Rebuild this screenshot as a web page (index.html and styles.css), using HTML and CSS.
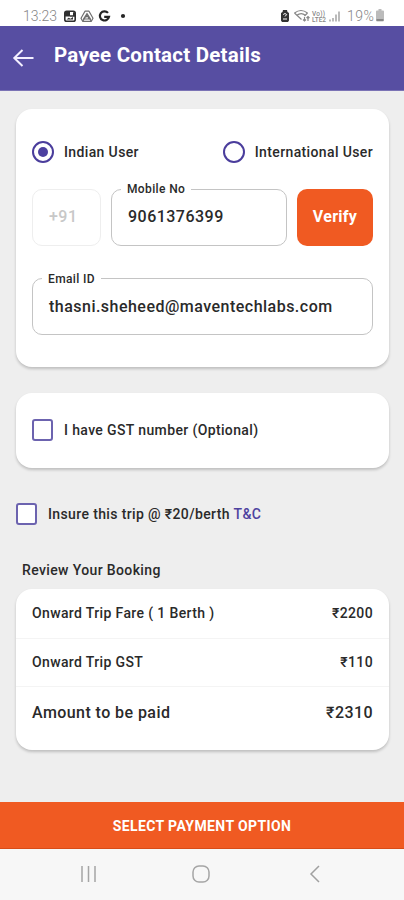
FILE: index.html
```html
<!DOCTYPE html>
<html lang="en">
<head>
<meta charset="utf-8">
<title>Payee Contact Details</title>
<link rel="stylesheet" href="styles.css">
</head>
<body>
<div class="status">
  <span class="clock">13:23</span>
  <svg class="left-icons" width="64" height="14" viewBox="0 0 64 14">
    <rect x="1.800" y="2.300" width="10.400" height="9.900" rx="1.800" fill="#fff" stroke="#303030" stroke-width="1.600"/>
    <path d="M2 3h5v4.500H2zM10 3.200h2v4h-2zM7 6.200h5v1.500H7zM3.500 10.500l2.200-1.800 1.800 1 2.500-1.700v2.500z" fill="#303030"/>
    <g fill="none" stroke="#707070" stroke-width="1.200" stroke-linejoin="round"><path d="M22 2.200h4l4 7-1.800 3.200h-8.400L18 9.200z"/><path d="M24 4.500l-3.500 5.500h7zM22.500 8.500l1.500-1.800 1.500 1.800v2M20 12l2-3.500M28 12l-2-3.500"/></g>
    <path d="M45 3.900a4.600 4.600 0 1 0 1 3.900h-4.800" fill="none" stroke="#252525" stroke-width="2.200"/>
    <circle cx="60" cy="7" r="2.100" fill="#252525"/>
  </svg>
  <svg class="right-icons" width="65" height="14" viewBox="0 0 65 14">
    <path d="M1 4l1.500-1L3 1h4l.5 2L9 4v7.500L8 13H2l-1-1.500z" fill="#333"/>
    <path d="M3.200 5.500q1.800-2 3.500 0L5 7.500M3 10h4" fill="none" stroke="#fff" stroke-width="1"/>
    <g fill="none" stroke="#888" stroke-width="1.200"><path d="M14.500 4q6.500-5 13 0M16.800 6.300q4.500-3.400 8.500 0"/><path d="M14.500 4l7 6.500M27.500 4l-3 3M24.500 12.500V8m-1.500 2.500l1.500 1.500 1.500-1.500M28 7.500V12M26.500 9L28 7.500 29.500 9"/></g>
    <text x="32" y="6.500" textLength="13" class="tiny">Vo))</text>
    <text x="32" y="13" textLength="14" class="tiny">LTE2</text>
    <path d="M50 12.500v-2M53 12.500V9M56 12.500V5.500M59 12.500V2.500" stroke="#aaa" stroke-width="1.600"/>
  </svg>
  <span class="percent">19%</span>
  <svg class="battery" width="8" height="13" viewBox="0 0 8 13"><path d="M2.500 0h3v1.500H7q1 0 1 1V11q0 1.500-1.500 1.500h-5Q0 12.500 0 11V2.500q0-1 1-1h1.500z" fill="#bbb"/><path d="M.5 10h7v2h-7z" fill="#888"/></svg>
</div>
<header class="appbar">
  <svg width="22" height="20" viewBox="0 0 22 20"><path d="M10.500 2L2.300 10l8.200 8M2.500 10h19" fill="none" stroke="#f4f0ff" stroke-width="2"/></svg>
  <h1>Payee Contact Details</h1>
</header>
<main>
  <section class="card contact">
    <div class="radios">
      <div class="choice"><i class="radio on"></i><span>Indian User</span></div>
      <div class="choice"><i class="radio"></i><span>International User</span></div>
    </div>
    <div class="phone">
      <div class="field code"><span>+91</span></div>
      <div class="field mobile"><label>Mobile No</label><span>9061376399</span></div>
      <button class="verify">Verify</button>
    </div>
    <div class="field email"><label>Email ID</label><span>thasni.sheheed@maventechlabs.com</span></div>
  </section>
  <section class="card gst"><i class="box"></i><span>I have GST number (Optional)</span></section>
  <div class="insure"><i class="box"></i><span>Insure this trip @ ₹20/berth <a>T&amp;C</a></span></div>
  <h2>Review Your Booking</h2>
  <section class="card fares">
    <div class="row"><span>Onward Trip Fare ( 1 Berth )</span><span>₹2200</span></div>
    <div class="row"><span>Onward Trip GST</span><span>₹110</span></div>
    <div class="row total"><span>Amount to be paid</span><span>₹2310</span></div>
  </section>
</main>
<button class="pay">SELECT PAYMENT OPTION</button>
<nav>
  <svg width="18" height="18" viewBox="0 0 18 18"><path d="M2 1v16M8.500 1v16M15 1v16" stroke="#a5a5a5" stroke-width="1.500"/></svg>
  <svg class="home" width="18" height="18" viewBox="0 0 18 18"><rect x="1" y="1" width="16" height="16" rx="6" fill="none" stroke="#a5a5a5" stroke-width="1.500"/></svg>
  <svg width="12" height="18" viewBox="0 0 12 18"><path d="M10 1L2 9l8 8" fill="none" stroke="#a0a0a0" stroke-width="1.500"/></svg>
</nav>
</body>
</html>
```
FILE: styles.css
```css
* { box-sizing: border-box; }
body {
  margin: 0; width: 404px; height: 900px; overflow: hidden;
  display: flex; flex-direction: column;
  background: #eee; color: #2a2a2a;
  font: 500 14px/20px Roboto, sans-serif;
  letter-spacing: .37px;
}
h1, h2, button { margin: 0; padding: 0; border: 0; font: inherit; color: inherit; }
i { display: block; flex: none; }
svg { flex: none; display: block; }
.status { height: 26px; flex: none; background: #fff; display: flex; align-items: center; padding: 5px 20px 0 23px; color: #858585; font-weight: 300; }
.clock { width: 40px; letter-spacing: 0; }
.right-icons { margin-left: auto; }
.percent { width: 29px; margin-left: 2px; letter-spacing: .5px; }
.tiny { font: 500 6.500px Roboto, sans-serif; letter-spacing: 0; fill: #888; }
.appbar { height: 65px; flex: none; background: #574ea2; display: flex; align-items: center; padding: 0 13px 0 12px; gap: 20px; color: #fff; border-bottom: 1px solid #7b73b5; }
.appbar h1 { font-size: 20.500px; line-height: 28px; font-weight: 700; letter-spacing: .23px; padding-bottom: 6px; white-space: nowrap; }
main { flex: 1; padding: 18px 15px 0 16px; }
.card { background: #fff; border-radius: 16px; box-shadow: 0 2px 3px rgba(0,0,0,.2); }
.contact { height: 258px; padding: 31px 16px 0; }
.radios { display: flex; justify-content: space-between; height: 23px; }
.choice { display: flex; align-items: center; gap: 10px; white-space: nowrap; }
.radio { width: 22px; height: 22px; border: 2px solid #4a3d9c; border-radius: 50%; padding: 4px; }
.radio.on::before { content: ""; display: block; width: 10px; height: 10px; border-radius: 50%; background: #4c40a0; }
.phone { display: flex; margin-top: 26px; height: 57px; }
.field { position: relative; border: 1px solid #c4c4c4; border-radius: 10px; padding: 0 16px; display: flex; align-items: center; font-size: 16px; letter-spacing: .48px; white-space: nowrap; }
.phone .field { padding-bottom: 2px; }
.field label { position: absolute; left: 9px; top: -11px; padding: 0 6px; background: #fff; font-size: 12px; letter-spacing: .37px; }
.code { width: 69px; border-color: #eee; color: #c8c8c8; }
.mobile { width: 176px; margin-left: 10px; }
.verify { width: 76px; margin-left: 10px; padding-bottom: 2px; border-radius: 10px; background: #f05a22; color: #fff; font-size: 16px; font-weight: 700; letter-spacing: .3px; }
.email { margin-top: 32px; height: 57px; }
.email label { top: -10px; }
.gst { margin-top: 26px; height: 75px; padding: 0 16px; display: flex; align-items: center; gap: 11px; }
.gst span { padding-bottom: 2px; }
.box { width: 21px; height: 22px; border: 2px solid #6c63af; border-radius: 3px; background: #fff; }
.gst .box { margin-bottom: 1px; }
.insure { margin-top: 35px; height: 22px; display: flex; align-items: center; gap: 11px; }
.insure a { color: #4e429f; }
h2 { margin: 35px 0 0 6px; font-size: 14px; line-height: 20px; }
.fares { margin-top: 9px; height: 161px; }
.row { height: 50px; padding: 0 16px 2px; display: flex; justify-content: space-between; align-items: center; border-bottom: 1px solid #f4f4f4; }
.row + .row { height: 48px; }
.row.total { height: 52px; padding-bottom: 0; border: 0; font-size: 16px; letter-spacing: .43px; }
.pay { height: 47px; flex: none; padding-top: 2px; background: #f05a22; color: #fff; text-align: center; font-weight: 700; letter-spacing: .4px; border-bottom: 1px solid #d84c18; }
nav { height: 51px; flex: none; background: #f7f7f7; display: flex; align-items: center; padding: 0 83px 1px 80px; }
nav .home { margin: 0 auto 0 94px; }
```
